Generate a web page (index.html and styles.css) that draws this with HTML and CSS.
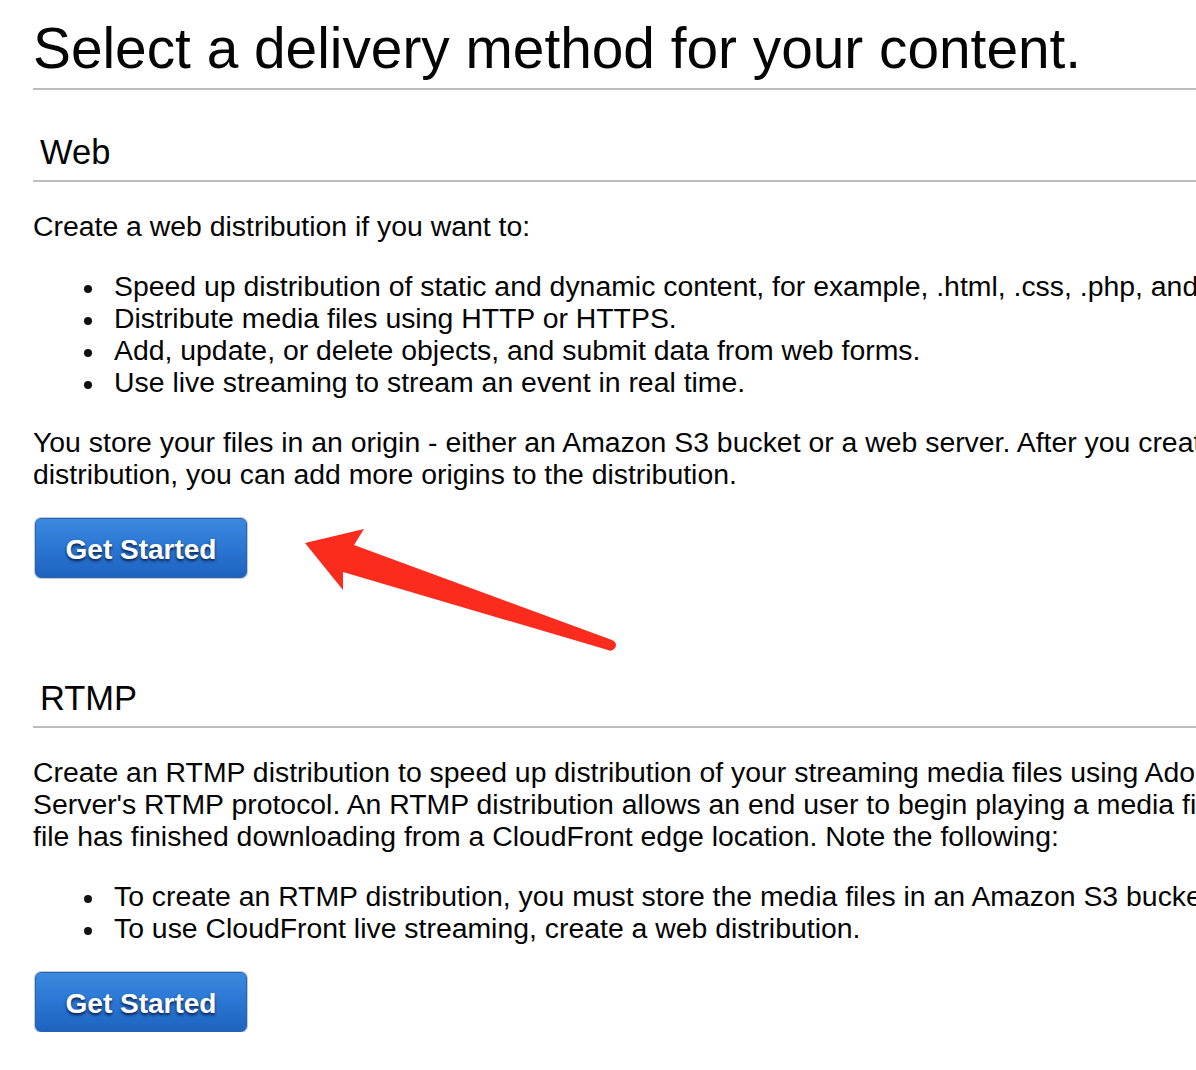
FILE: index.html
```html
<!DOCTYPE html>
<html lang="en">
<head>
<meta charset="utf-8">
<title>Select a delivery method</title>
<link rel="stylesheet" href="styles.css">
</head>
<body>
<div class="page">
  <h1 class="title">Select a delivery method for your content.</h1>

  <section class="method method-web">
    <h2 class="method-title">Web</h2>
    <p class="text">Create a web distribution if you want to:</p>
    <ul class="bullets">
      <li class="bullet">Speed up distribution of static and dynamic content, for example, .html, .css, .php, and graphics files.</li>
      <li class="bullet">Distribute media files using HTTP or HTTPS.</li>
      <li class="bullet">Add, update, or delete objects, and submit data from web forms.</li>
      <li class="bullet">Use live streaming to stream an event in real time.</li>
    </ul>
    <p class="text">You store your files in an origin - either an Amazon S3 bucket or a web server. After you create a distribution, you can add more origins to the distribution.</p>
    <button class="btn" type="button">Get Started</button>
  </section>

  <section class="method method-rtmp">
    <h2 class="method-title">RTMP</h2>
    <p class="text">Create an RTMP distribution to speed up distribution of your streaming media files using Adobe Flash Media Server's RTMP protocol. An RTMP distribution allows an end user to begin playing a media file before the file has finished downloading from a CloudFront edge location. Note the following:</p>
    <ul class="bullets">
      <li class="bullet">To create an RTMP distribution, you must store the media files in an Amazon S3 bucket.</li>
      <li class="bullet">To use CloudFront live streaming, create a web distribution.</li>
    </ul>
    <button class="btn" type="button">Get Started</button>
  </section>

  <svg class="annotation" width="1196" height="1070" viewBox="0 0 1196 1070" aria-hidden="true">
    <path d="M305 543 L364 529 L354 545 L612 640 Q618 643 615 648 Q612 652 608 650 L343 572 L343 590 Z" fill="#fb2b1e"/>
  </svg>
</div>
</body>
</html>
```

FILE: styles.css
```css
html, body {
  margin: 0;
  padding: 0;
  background: #ffffff;
}

body {
  overflow: hidden;
  font-family: "Liberation Sans", Arial, Helvetica, sans-serif;
  color: #050505;
}

.page {
  position: relative;
  width: 1359px;
  padding: 17px 0 0 33px;
}

.title {
  margin: 0;
  padding: 0 0 7px 0;
  font-size: 56.8px;
  line-height: 64px;
  font-weight: normal;
  border-bottom: 2px solid #bdbdbd;
}

.method {
  padding-top: 42px;
}

.method-rtmp {
  padding-top: 100px;
}

.method-title {
  margin: 0;
  padding: 0 0 8px 7px;
  font-size: 34.5px;
  line-height: 40px;
  font-weight: normal;
  border-bottom: 2px solid #bdbdbd;
}

.text {
  margin: 28px 0;
  font-size: 28.4px;
  line-height: 32px;
}

.bullets {
  margin: 28px 0;
  padding: 0;
  list-style: none;
  font-size: 28.4px;
  line-height: 32px;
}

.bullet {
  white-space: nowrap;
}

.bullet::before {
  content: "";
  display: inline-block;
  width: 8px;
  height: 8px;
  border-radius: 50%;
  background: #111;
  margin: 0 22px 0 51px;
  vertical-align: middle;
}

.btn {
  display: block;
  width: 212px;
  height: 60px;
  margin: 28px 0 0 2px;
  padding: 4px 0 0 0;
  border: 1px solid #2a63b0;
  border-radius: 6px;
  box-shadow: 0 0 0 1px #c3cad4;
  background: linear-gradient(to bottom, #3b8ae0 0%, #2c78d4 45%, #1d64c0 100%);
  color: #ffffff;
  font-family: "Liberation Sans", Arial, Helvetica, sans-serif;
  font-size: 28px;
  font-weight: bold;
  line-height: 54px;
  text-shadow: 0 2px 3px rgba(0, 15, 50, 0.85);
  cursor: pointer;
}

.annotation {
  position: absolute;
  left: 0;
  top: 0;
  pointer-events: none;
}
```
